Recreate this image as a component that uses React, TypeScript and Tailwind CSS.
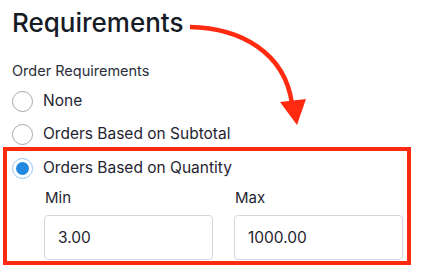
import React from "react";

function Radio({ checked }: { checked?: boolean }) {
  if (checked) {
    return (
      <span className="flex h-[21px] w-[21px] shrink-0 items-center justify-center rounded-full border-[1.5px] border-[#9cc6f0] bg-white">
        <span className="h-[13px] w-[13px] rounded-full bg-[#2388e0]" />
      </span>
    );
  }
  return <span className="h-[21px] w-[21px] shrink-0 rounded-full border-[1.5px] border-[#a3a7b0] bg-white" />;
}

function Option({ label, checked }: { label: string; checked?: boolean }) {
  return (
    <div className="flex h-[24px] items-center gap-[10px] text-[15.5px] leading-[24px] text-[#1f2430]">
      <Radio checked={checked} />
      <span>{label}</span>
    </div>
  );
}

function Field({ label, value }: { label: string; value: string }) {
  return (
    <div className="flex flex-col">
      <div className="pl-[1px] text-[15px] leading-[20px] text-[#1f2430]">{label}</div>
      <div className="mt-[7px] flex h-[45px] items-center rounded-[4px] border border-[#d4d6dc] bg-white pl-[13px] text-[15.5px] text-[#1f2430]">
        {value}
      </div>
    </div>
  );
}

export default function App() {
  return (
    <div
      className="relative h-[269px] w-[427px] overflow-hidden bg-white pl-[12px]"
      style={{ fontFamily: "Inter, 'Noto Sans', sans-serif" }}
    >
      <h1 className="pt-[6.5px] text-[26px] font-medium leading-[32px] text-[#161b26]">Requirements</h1>
      <div className="mt-[22.5px] text-[14.5px] leading-[20px] text-[#2a2f3a]">Order Requirements</div>
      <div className="mt-[8px] flex flex-col gap-[9px]">
        <Option label="None" />
        <Option label="Orders Based on Subtotal" />
      </div>
      <div className="ml-[-9px] mt-[1px] w-[408px] border-4 border-[#ff2a10] pb-[1px] pl-[5px] pr-[4px] pt-[5px]">
        <Option label="Orders Based on Quantity" checked />
        <div className="ml-[32px] mt-[8px] grid grid-cols-2 gap-[21px]">
          <Field label="Min" value="3.00" />
          <Field label="Max" value="1000.00" />
        </div>
      </div>
      <svg
        className="pointer-events-none absolute left-0 top-0"
        width="427"
        height="269"
        viewBox="0 0 427 269"
      >
        <path d="M190 27 C 240 28, 285 52, 292 104" fill="none" stroke="#ff2a10" strokeWidth="4.5" />
        <polygon points="280,102 306,99 297,125" fill="#ff2a10" />
      </svg>
    </div>
  );
}
